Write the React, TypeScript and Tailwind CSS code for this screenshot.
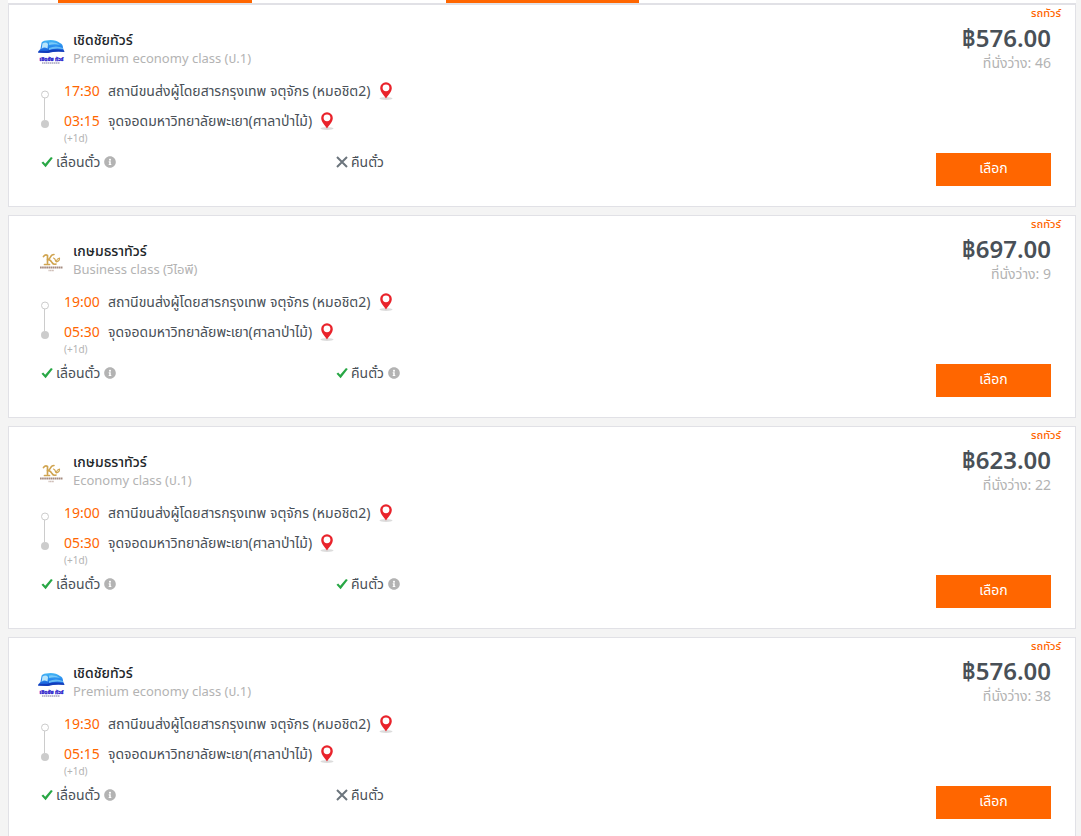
import { FaInfoCircle } from "react-icons/fa";

type Trip = {
  operator: "cherdchai" | "kasemtrara";
  seatClass: string;
  price: string;
  seats: number;
  departs: string;
  arrives: string;
  refundable: boolean;
};

const trips: Trip[] = [
  { operator: "cherdchai", seatClass: "Premium economy class (ป.1)", price: "576.00", seats: 46, departs: "17:30", arrives: "03:15", refundable: false },
  { operator: "kasemtrara", seatClass: "Business class (วีไอพี)", price: "697.00", seats: 9, departs: "19:00", arrives: "05:30", refundable: true },
  { operator: "kasemtrara", seatClass: "Economy class (ป.1)", price: "623.00", seats: 22, departs: "19:00", arrives: "05:30", refundable: true },
  { operator: "cherdchai", seatClass: "Premium economy class (ป.1)", price: "576.00", seats: 38, departs: "19:30", arrives: "05:15", refundable: false },
];

const operatorNames = { cherdchai: "เชิดชัยทัวร์", kasemtrara: "เกษมธราทัวร์" };

function CherdchaiLogo() {
  return (
    <svg viewBox="0 0 27 26" className="h-[26px] w-[27px]" aria-hidden="true">
      <defs>
        <linearGradient id="bus" x1="0" y1="0" x2="0" y2="1">
          <stop offset="0" stopColor="#45b8f5" />
          <stop offset="0.55" stopColor="#2384ed" />
          <stop offset="1" stopColor="#1748cc" />
        </linearGradient>
      </defs>
      <path d="M2.500 10 3.500 4Q4 2 8 1.500Q17 0 22 4Q25 5 25 9L26 12Q17 11 9 14L0 13.500Q0 12 2.500 10Z" fill="url(#bus)" />
      <path d="M4.500 4.500Q8 2.500 10 5L9.500 9.500Q6 7.500 3.500 10Z" fill="#b9e5fb" />
      <path d="M11 3.500Q18 2.500 22 6Q17 4.500 11 6Z" fill="#7acbf8" />
      <path d="M11 9Q18 6 25 9L25 10Q17 8.500 11 11Z" fill="#69bdf6" />
      <path d="M9 12Q16 9.500 26 11.500L26.500 13Q17 12 10 14L0 13.500 1 12Z" fill="#123cba" />
      <text x="13.500" y="22" textAnchor="middle" fontSize="5" fontWeight="800" fill="#2b20cb" stroke="#2b20cb" strokeWidth=".3">เชิดชัย ทัวร์</text>
      <path d="M4 24H22" stroke="#77739e" strokeWidth="1" strokeDasharray="1.500 .5" />
    </svg>
  );
}

function KasemtraraLogo() {
  return (
    <svg viewBox="0 0 24 26" className="h-[26px] w-6" aria-hidden="true">
      <g fill="none" stroke="#d0a450" strokeLinecap="round" strokeLinejoin="round">
        <path d="M4.500 6.500Q6.500 4 8.500 5.500V13M5.500 14.500H10.500" strokeWidth="1.700" />
        <path d="M15 4.500Q12.500 4.500 11.500 7Q10.500 9.500 8.500 9.500Q11.500 9.500 13 12.500Q14.500 15 17 14" strokeWidth="1.600" />
        <path d="M14.500 8Q16 8.500 16.500 10.500Q17 12.500 18.500 11.500Q20.500 11 20.500 8Q18 8.500 17.500 11" strokeWidth="1.200" />
      </g>
      <path d="M1 17.500H23.500" stroke="#a58b80" strokeWidth="2" strokeDasharray="1.700 .4" />
      <path d="M9.500 20.500H15" stroke="#cbb9b2" strokeWidth="1.500" strokeDasharray="1.200 .4" />
    </svg>
  );
}

function Pin() {
  return (
    <svg viewBox="0 0 14 19" className="h-[19px] w-3.5" aria-hidden="true">
      <ellipse cx="7" cy="16.500" rx="6.500" ry="1.500" fill="#dcdcdc" />
      <path fillRule="evenodd" d="M7 .2A5.800 5.800 0 0 0 1.200 6C1.200 9.700 4.500 12.500 7 16.500C9.500 12.500 12.800 9.700 12.800 6A5.800 5.800 0 0 0 7 .2ZM7 2.400A3.400 3.400 0 1 1 7 9.200A3.400 3.400 0 0 1 7 2.400Z" fill="#e9232b" />
    </svg>
  );
}

function RouteLine() {
  return (
    <svg viewBox="0 0 10 38" className="mt-3.5 h-[38px] w-2.5" fill="none" stroke="#cccccc" aria-hidden="true">
      <path d="M4.500 8V30" />
      <circle cx="5" cy="4.500" r="3.500" />
      <circle cx="5" cy="34" r="4" fill="#cccccc" stroke="none" />
    </svg>
  );
}

function Stop({ time, place }: { time: string; place: string }) {
  return (
    <div className="flex h-[30px] items-center">
      <time className="w-11 text-sm text-[#ff6600]">{time}</time>
      <span className="text-sm">{place}</span>
      <a href="#map" aria-label={`แผนที่ ${place}`} className="ml-2">
        <Pin />
      </a>
    </div>
  );
}

function Policy({ label, allowed }: { label: string; allowed: boolean }) {
  return (
    <div className="flex items-center gap-[3px] text-sm">
      {allowed ? (
        <svg viewBox="0 0 12 12" className="size-3" aria-hidden="true">
          <path d="M.5 6.800 2.200 5.400 4.200 7.800 10 1 11.800 2.100 4.600 11.300Z" fill="#28a745" />
        </svg>
      ) : (
        <svg viewBox="0 0 12 12" className="size-3" fill="none" stroke="#6c757d" strokeWidth="2" aria-hidden="true">
          <path d="M1 1 11 11M11 1 1 11" />
        </svg>
      )}
      <span>{label}</span>
      {allowed && <FaInfoCircle className="ml-px size-3 text-[#b3b3b3]" />}
    </div>
  );
}

function TripCard({ trip }: { trip: Trip }) {
  return (
    <article className="flex h-[203px] justify-between border border-[#e1e1e6] bg-white">
      <div className="flex flex-1 flex-col pl-7">
        <header className="flex h-[71px] items-start gap-2 pt-[26px]">
          <div className="flex w-7 justify-center pt-2">
            {trip.operator === "cherdchai" ? <CherdchaiLogo /> : <KasemtraraLogo />}
          </div>
          <div className="leading-[18px]">
            <h2 className="text-sm leading-[18px] font-medium text-[#212529]">{operatorNames[trip.operator]}</h2>
            <p className="text-[13px] text-[#b3b3b3]">{trip.seatClass}</p>
          </div>
        </header>
        <div className="flex h-[75px] gap-3.5 pl-[3px]">
          <RouteLine />
          <div>
            <Stop time={trip.departs} place="สถานีขนส่งผู้โดยสารกรุงเทพ จตุจักร (หมอชิต2)" />
            <Stop time={trip.arrives} place="จุดจอดมหาวิทยาลัยพะเยา(ศาลาป่าไม้)" />
            <p className="text-[10px] leading-1 text-[#b3b3b3]">(+1d)</p>
          </div>
        </div>
        <div className="flex h-[22px] items-center pl-1">
          <div className="w-[295px]">
            <Policy label="เลื่อนตั๋ว" allowed />
          </div>
          <Policy label="คืนตั๋ว" allowed={trip.refundable} />
        </div>
      </div>
      <div className="flex flex-col items-end pr-6 pb-5">
        <span className="-mr-2.5 text-[11px] leading-4 font-medium text-[#ff6600]">รถทัวร์</span>
        <strong className="text-2xl leading-[34px] font-semibold text-[#495057]">฿{trip.price}</strong>
        <span className="text-sm leading-4 text-[#b3b3b3]">ที่นั่งว่าง: {trip.seats}</span>
        <button type="button" className="mt-auto h-[33px] w-[115px] bg-[#ff6600] pb-1 text-sm text-white">เลือก</button>
      </div>
    </article>
  );
}

export default function App() {
  return (
    <main className="h-screen overflow-hidden bg-[#f4f4f4] pr-[5px] pl-2 font-['Noto_Sans','Noto_Sans_Thai',sans-serif] text-[#495057]">
      <div className="grid h-1 grid-cols-[50px_194px_194px_193px_1fr] border-b border-[#e1e1e6] bg-white">
        <div className="col-start-2 bg-[#ff6600]" />
        <div className="col-start-4 bg-[#ff6600]" />
      </div>
      <div className="flex flex-col gap-2">
        {trips.map((trip, index) => (
          <TripCard key={index} trip={trip} />
        ))}
      </div>
    </main>
  );
}
